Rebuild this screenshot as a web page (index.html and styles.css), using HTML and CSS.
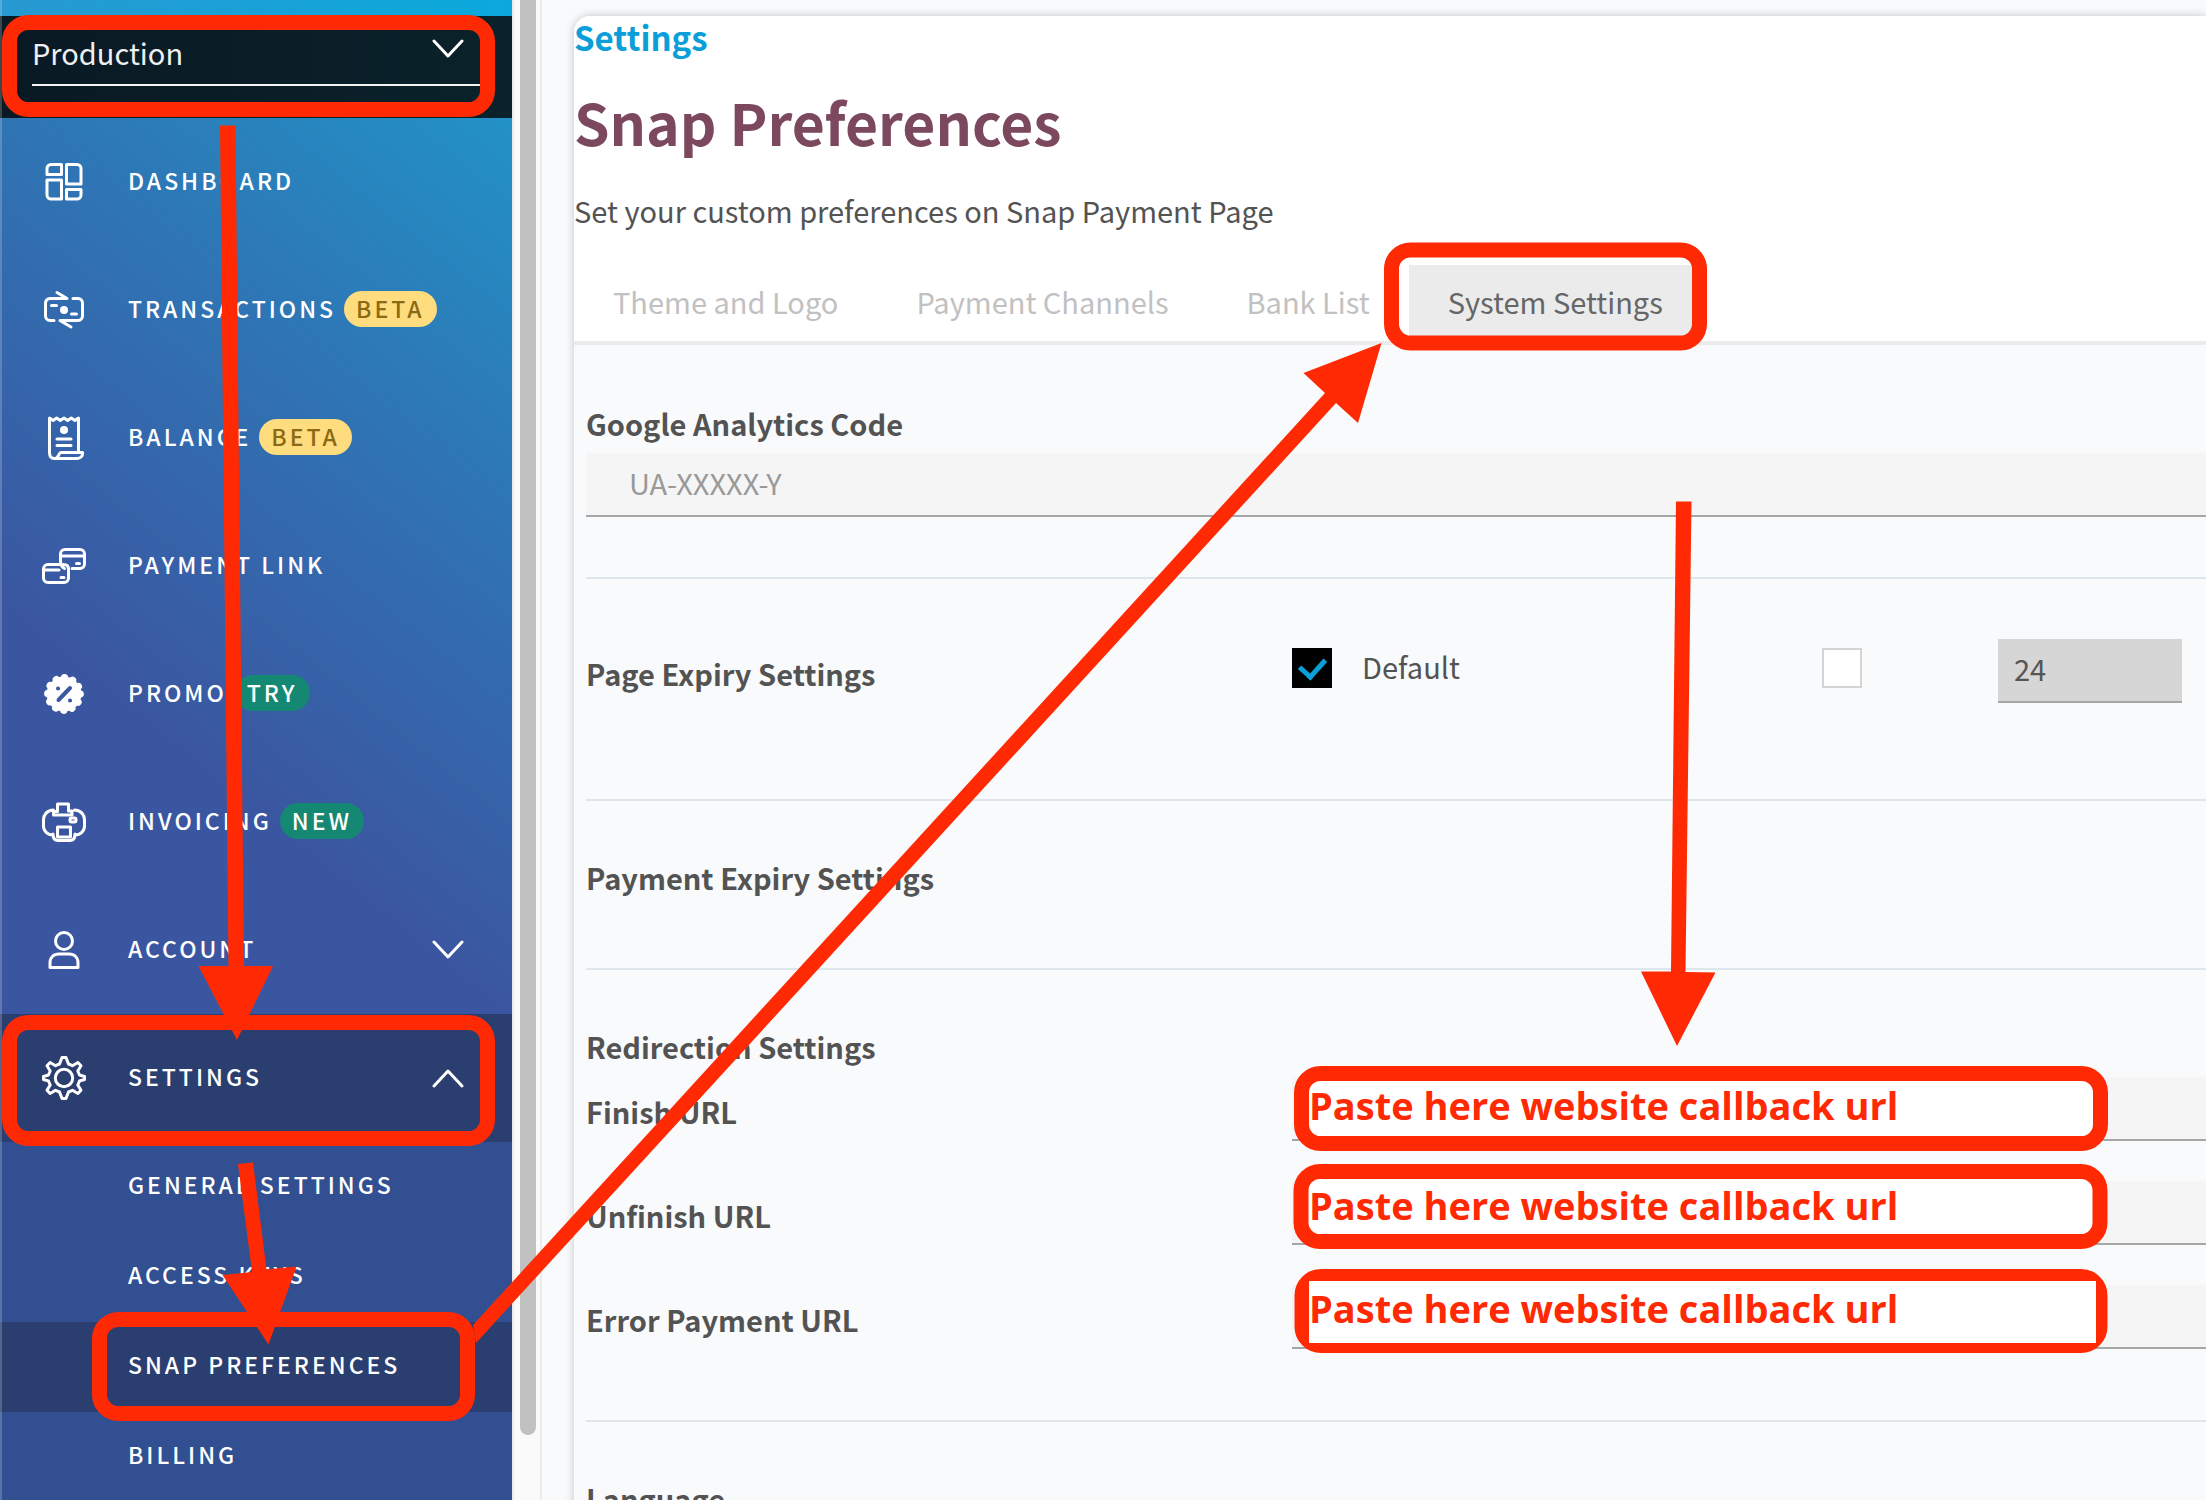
FILE: index.html
```html
<!DOCTYPE html>
<html lang="en">
<head>
<meta charset="utf-8">
<meta name="viewport" content="width=device-width, initial-scale=1">
<title>Snap Preferences</title>
<link rel="stylesheet" href="styles.css">
</head>
<body>
<div class="app">
  <aside class="sidebar">
    <div class="sidebar-top"></div>
    <div class="environment">
      <select class="environment-select" aria-label="Environment">
        <option>Production</option>
        <option>Sandbox</option>
      </select>
      <svg class="environment-chevron" width="32" height="20" viewBox="0 0 32 20" aria-hidden="true"><path d="M2 2l14 15L30 2"/></svg>
    </div>
    <nav class="menu" aria-label="Main">
      <a class="menu-item" href="#dashboard">
        <svg class="icon" viewBox="0 0 44 44" aria-hidden="true"><path d="M9 4.500h10.500v10H5V8.500a4 4 0 0 1 4-4zM5 20h14.500v19H9a4 4 0 0 1-4-4zM24.500 4.500H35a4 4 0 0 1 4 4V24H24.500zM24.500 29.500H39V35a4 4 0 0 1-4 4H24.500z"/></svg>
        <span class="menu-label">DASHBOARD</span>
      </a>
      <a class="menu-item" href="#transactions">
        <svg class="icon" viewBox="0 0 44 44" aria-hidden="true"><path d="M15 4.500l10 6H8a4.500 4.500 0 0 0-4.500 4.500v13A4.500 4.500 0 0 0 8 32.500h4M31 10.500h5a4.500 4.500 0 0 1 4.500 4.500v13a4.500 4.500 0 0 1-4.500 4.500H18l11 6.500M9.500 17.500h5M29.500 26h5"/><circle class="solid" cx="22" cy="22" r="4"/></svg>
        <span class="menu-label">TRANSACTIONS</span><span class="badge badge-beta">BETA</span>
      </a>
      <a class="menu-item" href="#balance">
        <svg class="icon" viewBox="0 0 44 44" aria-hidden="true"><path d="M36.500 36V2l-3.600 2.500L29.300 2l-3.700 2.500L22 2l-3.700 2.500L14.700 2l-3.600 2.500L7.500 2v34.500c0 4 2 6 5 6H35c4 0 6-3 5.500-6H19c-2.500 0-2 6-6 6M15 23h14M15 29.500h14"/><circle class="solid" cx="22" cy="14" r="4"/></svg>
        <span class="menu-label">BALANCE</span><span class="badge badge-beta">BETA</span>
      </a>
      <a class="menu-item" href="#payment-link">
        <svg class="icon" viewBox="0 0 44 44" aria-hidden="true"><path d="M17 20.500H6A4.500 4.500 0 0 0 1.500 25v9A4.500 4.500 0 0 0 6 38.500h16a4.500 4.500 0 0 0 4.500-4.500v-9c0-3-2-4.500-5-4.500M2 26h15M18.500 18v-8A4.500 4.500 0 0 1 23 5.500h15a4.500 4.500 0 0 1 4.500 4.500v10a4.500 4.500 0 0 1-4.500 4.500h-8M19 12h23M18.500 17c0 4 1 6 4 7.500M34.500 19.500h3M19 33.500h3"/></svg>
        <span class="menu-label">PAYMENT LINK</span>
      </a>
      <a class="menu-item" href="#promo">
        <svg class="icon" viewBox="0 0 44 44" aria-hidden="true"><circle class="solid" cx="22" cy="22" r="17.500"/><circle class="scallop" cx="22" cy="22" r="16.400"/><path class="cutout" d="M16.500 28L28 16M16 16.500h.100M28 28.500h.100"/></svg>
        <span class="menu-label">PROMO</span><span class="badge badge-green">TRY</span>
      </a>
      <a class="menu-item" href="#invoicing">
        <svg class="icon" viewBox="0 0 44 44" aria-hidden="true"><path d="M11.500 10C5 10 1.500 15 1.500 20v6c0 5 4 9 9.500 9M32.500 10C39 10 42.500 15 42.500 20v6c0 5-4 9-9.500 9M11.500 11.500V15H30v-4h-3.500V4h-11v7.500zM15.500 27h13v10h-13zM11 34c0 4 1.500 6.500 5 6.500h12c3.500 0 5-2.500 5-6.500"/><rect x="28" y="18" width="6" height="4" rx="1.500"/></svg>
        <span class="menu-label">INVOICING</span><span class="badge badge-green">NEW</span>
      </a>
      <button class="menu-item" type="button" aria-expanded="false">
        <svg class="icon" viewBox="0 0 44 44" aria-hidden="true"><circle cx="22" cy="13" r="8.500"/><path d="M8 39.500V35c0-5.500 3.500-9 9-9h10c5.500 0 9 3.500 9 9v4.500z"/></svg>
        <span class="menu-label">ACCOUNT</span>
        <svg class="chevron" viewBox="0 0 32 20" aria-hidden="true"><path d="M2 2l14 15L30 2"/></svg>
      </button>
      <button class="menu-item menu-item-active" type="button" aria-expanded="true">
        <svg class="icon" viewBox="0 0 44 44" aria-hidden="true"><circle cx="22" cy="22" r="8.700"/><path d="M20 1.500h4l2.500 6.500 4 1.700 5.400-3.200 3.100 3.200-3.200 5.300 1.700 4 5 1.500v3l-5 1.500-1.700 4 3.200 5.300-3.100 3.200-5.400-3.200-4 1.700-2.500 6.500h-4l-2.500-6.500-4-1.700L8.100 37.500 5 34.300l3.200-5.300-1.700-4-5-1.500v-3l5-1.500 1.700-4L5 9.700l3.100-3.200 5.400 3.200 4-1.700z"/></svg>
        <span class="menu-label">SETTINGS</span>
        <svg class="chevron" viewBox="0 0 32 20" aria-hidden="true"><path d="M2 18L16 3l14 15"/></svg>
      </button>
    </nav>
    <nav class="submenu" aria-label="Settings">
      <a class="submenu-item" href="#general">GENERAL SETTINGS</a>
      <a class="submenu-item" href="#keys">ACCESS KEYS</a>
      <a class="submenu-item submenu-item-active" href="#snap" aria-current="page">SNAP PREFERENCES</a>
      <a class="submenu-item" href="#billing">BILLING</a>
    </nav>
  </aside>
  <div class="scroll-track"><div class="scroll-thumb"></div></div>
  <main class="main">
    <div class="card">
      <header class="card-header">
        <a class="breadcrumb" href="#settings">Settings</a>
        <h1 class="title">Snap Preferences</h1>
        <p class="subtitle">Set your custom preferences on Snap Payment Page</p>
        <div class="tabs" role="tablist">
          <button class="tab" type="button" role="tab">Theme and Logo</button>
          <button class="tab" type="button" role="tab">Payment Channels</button>
          <button class="tab" type="button" role="tab">Bank List</button>
          <button class="tab tab-active" type="button" role="tab" aria-selected="true">System Settings</button>
        </div>
      </header>
      <form class="form">
        <section class="section section-analytics">
          <label class="section-title" for="analytics">Google Analytics Code</label>
          <input class="field field-wide" id="analytics" type="text" placeholder="UA-XXXXX-Y">
        </section>
        <section class="section section-expiry">
          <div class="row">
            <h2 class="row-label">Page Expiry Settings</h2>
            <label class="check-cell"><input class="check" type="checkbox" checked><span class="check-text">Default</span></label>
            <div class="check-cell"><input class="check" type="checkbox" aria-label="Custom expiry"></div>
            <input class="field field-number" type="text" value="24" aria-label="Expiry duration" disabled>
          </div>
        </section>
        <section class="section">
          <h2 class="section-title">Payment Expiry Settings</h2>
        </section>
        <section class="section">
          <h2 class="section-title">Redirection Settings</h2>
          <div class="rows">
            <div class="row"><label class="row-label" for="finish">Finish URL</label><input class="field field-url" id="finish" type="text"></div>
            <div class="row"><label class="row-label" for="unfinish">Unfinish URL</label><input class="field field-url" id="unfinish" type="text"></div>
            <div class="row"><label class="row-label" for="error">Error Payment URL</label><input class="field field-url" id="error" type="text"></div>
          </div>
        </section>
        <section class="section">
          <h2 class="section-title">Language</h2>
        </section>
      </form>
    </div>
  </main>
</div>
<svg class="annotations" width="2206" height="1500" viewBox="0 0 2206 1500">
  <g class="frame">
    <rect x="9.500" y="22.500" width="478" height="87" rx="19"/>
    <rect x="9.500" y="1022.500" width="478" height="116" rx="19"/>
    <rect x="99.500" y="1319.500" width="368" height="94" rx="19"/>
    <rect x="1391.500" y="250" width="308" height="93" rx="19"/>
  </g>
  <g class="frame frame-filled">
    <rect x="1301.500" y="1073.500" width="799" height="70" rx="19"/>
    <rect x="1301" y="1171.500" width="799" height="70" rx="19"/>
    <rect x="1302" y="1276.500" width="798" height="69" rx="19"/>
  </g>
  <rect class="patch" x="1309" y="1281" width="787" height="62"/>
  <g class="arrow">
    <path d="M220 125.500h15.500L244 966h29l-36 74-38.500-74h30z"/>
    <path d="M238 1164l15-1.500 13.500 107 30-3-28 78-46-69.500 29.500-3z"/>
    <path d="M473 1325L770 1000 1325 393l-21.500-20 78-30-23.500 80-22-20L790 1000 476 1343z"/>
    <path d="M1676 501.500h15.500l-6 470.500 30 .500L1677 1046l-36-74.500h30z"/>
  </g>
  <g class="note">
    <text x="1309" y="1120">Paste here website callback url</text>
    <text x="1309" y="1220">Paste here website callback url</text>
    <text x="1309" y="1323">Paste here website callback url</text>
  </g>
</svg>
</body>
</html>
```
FILE: styles.css
```css
* {
  box-sizing: border-box;
}

body {
  margin: 0;
  font-family: "Noto Sans CJK SC", "Noto Sans", sans-serif;
  font-size: 29px;
  line-height: 40px;
  color: #535353;
  background: #f9fafc;
}

h1,
h2,
p {
  margin: 0;
}

a {
  color: inherit;
  text-decoration: none;
}

button,
input,
select {
  font: inherit;
  color: inherit;
  border: 0;
  border-radius: 0;
  margin: 0;
}

.app {
  display: flex;
  height: 100vh;
  overflow: hidden;
}

/* Sidebar */

.sidebar {
  position: relative;
  flex: 0 0 512px;
  display: flex;
  flex-direction: column;
  overflow: hidden;
  color: #fff;
  background: linear-gradient(219deg, #1f9acb 0, #2292c6 92px, #2f74b4 414px, #3b56a1 788px);
}

.sidebar::after {
  content: "";
  position: absolute;
  inset: 0 auto 0 0;
  width: 2px;
  background: rgba(255, 255, 255, 0.2);
}

.sidebar-top {
  flex: none;
  height: 16px;
  background: linear-gradient(90deg, #2899d1, #0aa9dc);
}

.environment {
  position: relative;
  flex: none;
  height: 102px;
  padding: 0 32px;
  background: linear-gradient(90deg, #0a1923, #0a222b);
}

.environment-select {
  appearance: none;
  display: block;
  width: 100%;
  height: 70px;
  padding: 4px 0 0;
  color: #eef0f2;
  background: transparent;
  border-bottom: 2px solid #f3f4f5;
}

.environment-chevron {
  position: absolute;
  top: 23px;
  right: 48px;
  pointer-events: none;
}

.environment-chevron,
.chevron,
.icon {
  fill: none;
  stroke: #fff;
  stroke-width: 3;
  stroke-linecap: round;
  stroke-linejoin: round;
}

.menu,
.submenu {
  display: flex;
  flex-direction: column;
  flex: none;
  font-size: 23px;
  font-weight: 500;
  letter-spacing: 3px;
}

.menu-item {
  display: flex;
  align-items: center;
  width: 100%;
  height: 128px;
  padding: 0 48px 0 42px;
  text-align: left;
  letter-spacing: inherit;
  background: transparent;
}

.menu-item-active,
.submenu-item-active {
  background: #2a3e70;
}

.icon {
  flex: none;
  width: 44px;
  height: 44px;
  margin-right: 42px;
}

.icon .solid {
  fill: #fff;
  stroke: none;
}

.icon .scallop {
  stroke-width: 7;
  stroke-dasharray: 0.1 8.487;
}

.icon .cutout {
  stroke: #3b58a3;
  stroke-width: 4;
}

.menu-label {
  padding-bottom: 4px;
}

.chevron {
  width: 32px;
  height: 20px;
  margin-left: auto;
}

.badge {
  height: 36px;
  margin: 0 0 2px 8px;
  padding: 0 12px;
  line-height: 34px;
  border-radius: 18px;
}

.badge-beta {
  color: #8a6a14;
  background: #ffdc7d;
}

.badge-green {
  background: #158873;
}

.submenu {
  flex: 1 0 auto;
  background: #324f91;
}

.submenu-item {
  height: 90px;
  padding: 0 0 5px 128px;
  line-height: 85px;
}

/* Scrollbar */

.scroll-track {
  flex: 0 0 30px;
  padding: 0 4px 0 6px;
  background: #fafafa;
  border: solid #ebebeb;
  border-width: 0 2px;
}

.scroll-thumb {
  width: 16px;
  height: 1435px;
  background: #c1c1c1;
  border-radius: 0 0 8px 8px;
}

/* Content */

.main {
  flex: 1;
  min-width: 0;
  padding: 16px 0 0 32px;
}

.card {
  min-height: 100%;
  background: #f9fafc;
  border-radius: 16px 0 0 0;
  box-shadow: 0 0 10px rgba(0, 0, 0, 0.22);
}

.card-header {
  background: #fff;
  border-bottom: 4px solid #ebebeb;
  border-radius: 16px 0 0 0;
}

.breadcrumb {
  display: block;
  font-size: 33px;
  line-height: 42px;
  font-weight: 700;
  color: #0a9fd8;
}

.title {
  padding: 26px 0 32px;
  font-size: 57px;
  line-height: 74px;
  font-weight: 700;
  color: #7b485d;
}

.tabs {
  display: flex;
  margin-top: 35px;
}

.tab {
  height: 76px;
  padding: 0 39px 4px;
  color: #c1c1c1;
  background: transparent;
}

.tab-active {
  color: #666;
  background: #ebebeb;
}

.form {
  padding-left: 12px;
}

.section {
  padding: 56px 0 71px;
  border-top: 2px solid #dde6ed;
}

.section-analytics {
  padding: 58px 0 60px;
  border-top: 0;
}

.section-expiry {
  padding: 60px 0 96px;
}

.section-title {
  display: block;
  font-size: 29px;
  font-weight: 700;
}

.row-label {
  padding-top: 4px;
  font-size: 29px;
  font-weight: 700;
}

.field {
  display: block;
  height: 64px;
  padding: 0 16px 4px;
  background: #f5f5f5;
  border-bottom: 2px solid #a6a6a6;
}

.field-wide {
  width: 100%;
  margin-top: 10px;
  padding-left: 43px;
}

.field::placeholder {
  color: #999;
  opacity: 1;
}

.field-url {
  grid-column: 2 / -1;
}

.field-number {
  width: 184px;
  color: #555;
  background: #d6d6d6;
}

.rows {
  display: grid;
  gap: 40px;
  margin-top: 11px;
}

.row {
  display: grid;
  grid-template-columns: 4fr 3fr 1fr 208px;
  align-items: center;
}

.check-cell {
  display: flex;
  align-items: center;
  gap: 30px;
  padding-bottom: 6px;
}

.check-text {
  padding-bottom: 4px;
}

.check {
  appearance: none;
  width: 40px;
  height: 40px;
  background: #fff;
  border: 2px solid #d4d4d4;
}

.check:checked {
  border: 0;
  background: #000;
  display: grid;
  place-items: center;
}

.check:checked::before {
  content: "";
  width: 12px;
  height: 20px;
  border: solid #0a9fd8;
  border-width: 0 5px 5px 0;
  transform: rotate(42deg);
  margin-bottom: 5px;
}

/* Guide marks drawn over the page */

.annotations {
  position: absolute;
  top: 0;
  left: 0;
  pointer-events: none;
}

.frame {
  fill: none;
  stroke: #ff2a04;
  stroke-width: 15;
}

.frame-filled,
.patch {
  fill: #fff;
}

.arrow {
  fill: #ff2a04;
}

.note {
  fill: #ff2a04;
  font-family: "Open Sans", sans-serif;
  font-size: 38px;
  font-weight: 700;
}
```
